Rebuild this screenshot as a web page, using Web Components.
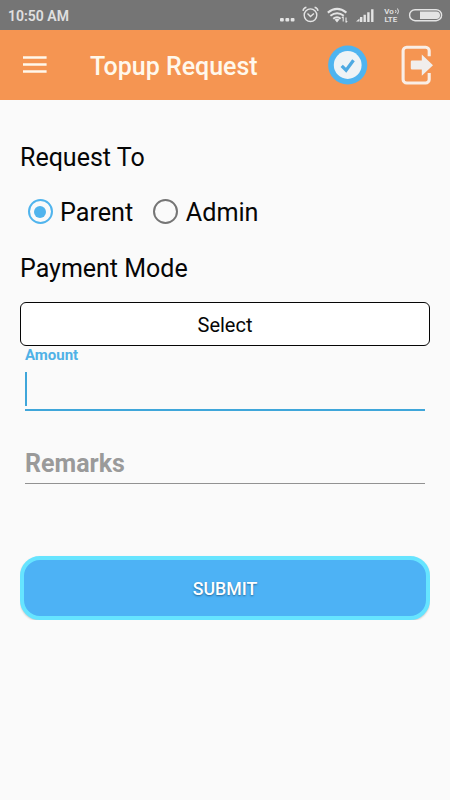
<!DOCTYPE html>
<html lang="en">
<head>
<meta charset="utf-8">
<title>Topup Request</title>
<style>
body{margin:0;background:#fafafa;font-family:Roboto,"Liberation Sans",sans-serif;color:#060606}
</style>
</head>
<body>
<topup-screen></topup-screen>
<script>
function define(name, html){
  const t=document.createElement('template');
  t.innerHTML=html;
  customElements.define(name, class extends HTMLElement{
    constructor(){
      super();
      this.attachShadow({mode:'open'}).append(t.content.cloneNode(true));
    }
  });
}

define('status-bar', `
<style>
:host{display:flex;justify-content:space-between;align-items:center;height:30px;background:#757575;color:#e0e0e0}
.time{padding:1px 0 0 8px;font-size:14px;line-height:16px;font-weight:600;white-space:nowrap}
svg{display:block}
text{font:600 6.6px Roboto,sans-serif;fill:#e4e4e4;stroke:none}
</style>
<div class="time"><slot></slot></div>
<svg width="180" height="30" viewBox="270 0 180 30" fill="none" stroke="#e4e4e4">
  <g fill="#e4e4e4" stroke="none">
    <rect x="280" y="18" width="3.8" height="3.5" rx="1"/><rect x="285.4" y="18" width="3.8" height="3.5" rx="1"/><rect x="290.7" y="18" width="3.8" height="3.5" rx="1"/>
  </g>
  <circle cx="310.5" cy="15.2" r="6.3" stroke-width="1.4"/>
  <path d="M307.5 13.5l3 3 3.4-3M303 10.8c.3-1.8 1.5-3 3.4-3.5M318 10.8c-.3-1.8-1.5-3-3.4-3.5" stroke-width="1.4"/>
  <path d="M327.8 12.6q9.3-7.4 18.6 0M330.4 15.8q6.7-5.2 13.4 0M333.2 18.7q3.9-3 7.4 0" stroke-width="2"/>
  <path d="M334.5 19.6q2.5-1.7 5 0l-2.5 2.9z" fill="#e4e4e4" stroke="none"/>
  <path d="M343.2 16.5v5M346 17.5v5M341.9 18l1.3-1.5M347.2 21l-1.2 1.5" stroke-width="1.1"/>
  <path d="M356 21.5l3.5-3v3z" fill="#e4e4e4" stroke="none"/>
  <path d="M361.2 22v-5M364.7 22v-7.2M368.4 22v-9.8M372.3 22V9.2" stroke-width="2.4"/>
  <text transform="translate(384.2 13.6) scale(1.2 1)">Vo</text>
  <path d="M395.5 10q1.2 1.4 0 3M397.5 8.5q2 2.7 0 5.6" stroke-width="1"/>
  <text transform="translate(384.5 22.3) scale(1.2 1)">LTE</text>
  <rect x="409.6" y="9.7" width="32" height="11" rx="5.5" stroke-width="1.4"/>
  <path d="M420 11.4h16.2a3.8 3.8 0 0 1 0 7.6H420z" fill="#e4e4e4" stroke="none"/>
</svg>`);

define('menu-icon', `
<style>:host{display:block}svg{display:block}</style>
<svg width="24" height="18" viewBox="0 0 24 18" stroke="#fff8ec" stroke-width="2.5"><path d="M0 1.6h23.6M0 8.6h23.6M0 15.6h23.6"/></svg>`);

define('check-badge', `
<style>:host{display:block}svg{display:block}</style>
<svg width="40" height="40" viewBox="0 0 40 40"><circle cx="19.7" cy="20" r="19.6" fill="#4eb4f0"/><circle cx="19.7" cy="20" r="13.9" fill="#eef3f6"/><path d="M13.7 20.8l4.4 4.4 7.4-10" fill="none" stroke="#4da9e2" stroke-width="3.2"/></svg>`);

define('exit-icon', `
<style>:host{display:block}svg{display:block}</style>
<svg width="34" height="40" viewBox="0 0 34 40"><path d="M29.2 11.2V5.8a3.6 3.6 0 0 0-3.6-3.6H6.7a3.6 3.6 0 0 0-3.6 3.6v28.6A3.6 3.6 0 0 0 6.7 38h18.9a3.6 3.6 0 0 0 3.6-3.6V28" fill="none" stroke="#f9eee6" stroke-width="3.1"/><path d="M12 15.6h9.8V9.4L33 20.2 21.8 30.8v-6.4H12q-1.2 0-1.2-1.2v-6.4q0-1.2 1.2-1.2z" fill="#f1eeec"/></svg>`);

define('app-bar', `
<style>
:host{display:flex;align-items:center;height:70px;box-sizing:border-box;padding:0 16px 0 23px;background:#f59552;color:#fff8ec}
h1{flex:1;margin:0;padding:3px 0 0 43px;font-size:25px;line-height:30px;font-weight:500;white-space:nowrap}
exit-icon{margin-left:32px}
</style>
<menu-icon></menu-icon><h1><slot></slot></h1><check-badge></check-badge><exit-icon></exit-icon>`);

define('form-label', `
<style>:host{display:block;font-size:25px;line-height:30px;white-space:nowrap}</style><slot></slot>`);

define('radio-option', `
<style>
:host{display:flex;align-items:center;gap:7.5px;font-size:25.2px;line-height:30px;color:#060606}
i{box-sizing:border-box;width:25px;height:25px;border:2.5px solid #757575;border-radius:50%;display:grid;place-items:center;margin-top:-3px}
:host([checked]) i{border-color:#50b4ed}
:host([checked]) i::after{content:"";width:12px;height:12px;border-radius:50%;background:#50b4ed}
</style><i></i><span><slot></slot></span>`);

define('select-box', `
<style>:host{display:flex;align-items:center;justify-content:center;box-sizing:border-box;height:44px;border:1.4px solid #060606;border-radius:6px;background:#fff;font-size:20px;line-height:24px;padding-top:2px}</style><slot></slot>`);

define('text-field', `
<style>
:host{display:flex;flex-direction:column;margin:0 5px;font-weight:700}
.label{height:18px;font-size:15px;line-height:18px;color:#50b1e6}
.row{height:47px;box-sizing:border-box;padding-top:8px;border-bottom:2px solid #3fa6da}
.caret{width:2px;height:34px;background:#3fa6da}
:host([hint]) .label{display:none}
:host([hint]) .caret{display:none}
.hint{display:none}
:host([hint]) .hint{display:block;font-size:25px;line-height:30px;color:#9a9a9a}
:host([hint]) .row{height:37px;padding-top:2px;border-bottom:1px solid #929292}
</style>
<div class="label"><slot name="label"></slot></div><div class="row"><div class="caret"></div><div class="hint"><slot></slot></div></div>`);

define('submit-button', `
<style>:host{display:flex;align-items:center;justify-content:center;box-sizing:border-box;height:64px;border:4px solid #66e4ff;border-radius:20px;background:#4db2f5;color:#fff;font-size:17.7px;line-height:22px;font-weight:500;text-shadow:0 1px 2px #246899;box-shadow:0 1px 2px #0003;clip-path:inset(-1px 0 0 0);padding-top:1px}</style><slot></slot>`);

define('topup-screen', `
<style>
:host{display:block;min-height:800px;background:#fafafa}
main{display:flex;flex-direction:column;padding:43px 20px 0}
.radios{display:flex;gap:20px;padding-left:7.5px;margin:25px 0 26px}
select-box{margin-top:18px}
.remarks{margin-top:36px}
submit-button{margin-top:72px}
</style>
<status-bar>10:50 AM</status-bar>
<app-bar>Topup Request</app-bar>
<main>
<form-label>Request To</form-label>
<div class="radios"><radio-option checked>Parent</radio-option><radio-option>Admin</radio-option></div>
<form-label>Payment Mode</form-label>
<select-box>Select</select-box>
<text-field><span slot="label">Amount</span></text-field>
<text-field class="remarks" hint>Remarks</text-field>
<submit-button>SUBMIT</submit-button>
</main>`);
</script>
</body>
</html>
